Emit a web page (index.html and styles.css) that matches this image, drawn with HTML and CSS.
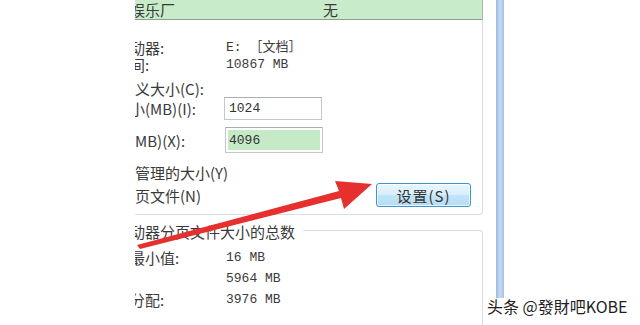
FILE: index.html
```html
<!DOCTYPE html>
<html lang="zh-CN">

<head>
  <meta charset="UTF-8">
  <meta name="viewport" content="width=device-width, initial-scale=1.0">
  <title>虚拟内存</title>
  <link rel="stylesheet" href="styles.css">
</head>

<body>
  <div class="screen">
    <div class="clip">
      <div class="panel">
        <!-- 驱动器列表（选中行） -->
        <div class="drive-list">
          <span class="drive-name">娱乐厂</span>
          <span>无</span>
        </div>

        <div class="group1">
          <div class="row">
            <span>所选驱动器:</span>
            <span class="val">E: ［文档］</span>
          </div>
          <div class="row">
            <span>可用空间:</span>
            <span class="val">10867 MB</span>
          </div>
          <div class="row row-custom">
            <span class="radio-label">自定义大小(C):</span>
          </div>
          <div class="row row-input">
            <span>初始大小(MB)(I):</span>
            <input class="field" type="text" value="1024">
          </div>
          <div class="row row-input row-max">
            <span>最大值(MB)(X):</span>
            <input class="field field-focus" type="text" value="4096">
          </div>
          <div class="row row-system">
            <span class="radio-label">系统管理的大小(Y)</span>
          </div>
          <div class="row-end">
            <span class="radio-label">无分页文件(N)</span>
            <button class="btn">设置(S)</button>
          </div>
        </div>

        <!-- 所有驱动器分页文件大小的总数 -->
        <div class="group2">
          <div class="group2-head">
            <span class="group2-title">所有驱动器分页文件大小的总数</span>
            <span class="group2-line"></span>
          </div>
          <div class="group2-body">
            <div class="row row-total">
              <span>允许的最小值:</span>
              <span class="val">16 MB</span>
            </div>
            <div class="row row-total">
              <span>推荐:</span>
              <span class="val">5964 MB</span>
            </div>
            <div class="row row-total">
              <span>当前已分配:</span>
              <span class="val">3976 MB</span>
            </div>
          </div>
        </div>
      </div>
    </div>
    <div class="frame-edge"></div>
  </div>

  <!-- 红色箭头 -->
  <svg class="arrow" width="640" height="325" viewBox="0 0 640 325">
    <polygon points="137,245 339,191 335,181 372,184 344,209 341,198 140,249" fill="#e6302d" />
  </svg>

  <div class="watermark">头条 @發財吧KOBE</div>
</body>

</html>
```

FILE: styles.css
```css
body {
  margin: 0;
  width: 640px;
  height: 325px;
  overflow: hidden;
  position: relative;
  background-color: #fff;
  font-family: "Noto Sans CJK SC", sans-serif;
  color: #3a3a3a;
}

.screen {
  display: flex;
  align-items: flex-start;
}

/* 截图左侧被裁掉 */
.clip {
  margin-left: 135px;
  width: 348px;
  height: 325px;
  overflow: hidden;
}

.panel {
  margin-left: -50px;
  width: 398px;
  font-size: 15px;
}

.drive-list {
  display: grid;
  grid-template-columns: 238px 1fr;
  height: 19px;
  line-height: 19px;
  background-color: #c8ebca;
  border-bottom: 1px solid #8e9e8e;
  border-right: 1px solid #a9b9a9;
}

.drive-name {
  padding-left: 45px;
}

.group1 {
  border-right: 1px solid #d5dfe5;
  border-bottom: 1px solid #d5dfe5;
  border-bottom-right-radius: 4px;
  padding: 19px 0 7px;
}

.row {
  display: grid;
  grid-template-columns: 141px 1fr;
  align-items: center;
  height: 17px;
  line-height: 17px;
  white-space: nowrap;
}

.val {
  font-family: "Liberation Mono", "Noto Sans CJK SC", monospace;
  font-size: 13px;
}

.radio-label {
  padding-left: 20px;
}

.row-custom {
  margin-top: 7px;
}

.row-input {
  height: 23px;
}

.row-max {
  height: 26px;
  margin-top: 7px;
}

.row-system {
  height: 18px;
  margin-top: 10px;
}

.field {
  width: 98px;
  height: 23px;
  box-sizing: border-box;
  margin: 0 0 0 -2px;
  padding: 0 0 0 4px;
  border: 1px solid #c3c8d0;
  border-top-color: #a9aeb6;
  font-family: "Liberation Mono", monospace;
  font-size: 13px;
  color: #333;
  background-color: #fff;
}

.field-focus {
  height: 26px;
  margin-left: -1px;
  padding-left: 3px;
  background-color: #c6eac6;
  box-shadow: inset 0 0 0 2px #fff;
}

.row-end {
  display: flex;
  justify-content: space-between;
  align-items: center;
  height: 24px;
  margin-top: 2px;
  white-space: nowrap;
}

.btn {
  width: 95px;
  height: 24px;
  margin-right: 11px;
  border: 1px solid #3f95cc;
  border-radius: 3px;
  background: linear-gradient(#eaf6fd, #d6eefb 50%, #c2e4f7 51%, #b5ddf4);
  box-shadow: inset 0 0 0 1px rgba(255, 255, 255, 0.7);
  font-family: "Noto Sans CJK SC", sans-serif;
  font-size: 15px;
  letter-spacing: 1px;
  color: #333;
  padding: 0;
}

.group2 {
  margin-top: 8px;
}

.group2-head {
  display: flex;
  height: 18px;
  line-height: 18px;
  white-space: nowrap;
}

.group2-title {
  padding-right: 8px;
}

.group2-line {
  flex: 1;
  height: 10px;
  align-self: flex-end;
  border-top: 1px solid #d5dfe5;
  border-right: 1px solid #d5dfe5;
  border-top-right-radius: 4px;
}

.group2-body {
  border-right: 1px solid #d5dfe5;
  height: 100px;
  padding-top: 8px;
  display: flex;
  flex-direction: column;
  gap: 3px;
}

.row-total {
  height: 18px;
  line-height: 18px;
}

.frame-edge {
  margin-left: 13px;
  width: 8px;
  height: 298px;
  background: linear-gradient(90deg, #9ab8e0, #c9dcf2 50%, #a4c0e6);
}

.arrow {
  position: absolute;
  left: 0;
  top: 0;
}

.watermark {
  position: absolute;
  left: 487px;
  top: 296px;
  font-size: 16px;
  line-height: 20px;
  color: #1e1e1e;
  white-space: nowrap;
}
```
